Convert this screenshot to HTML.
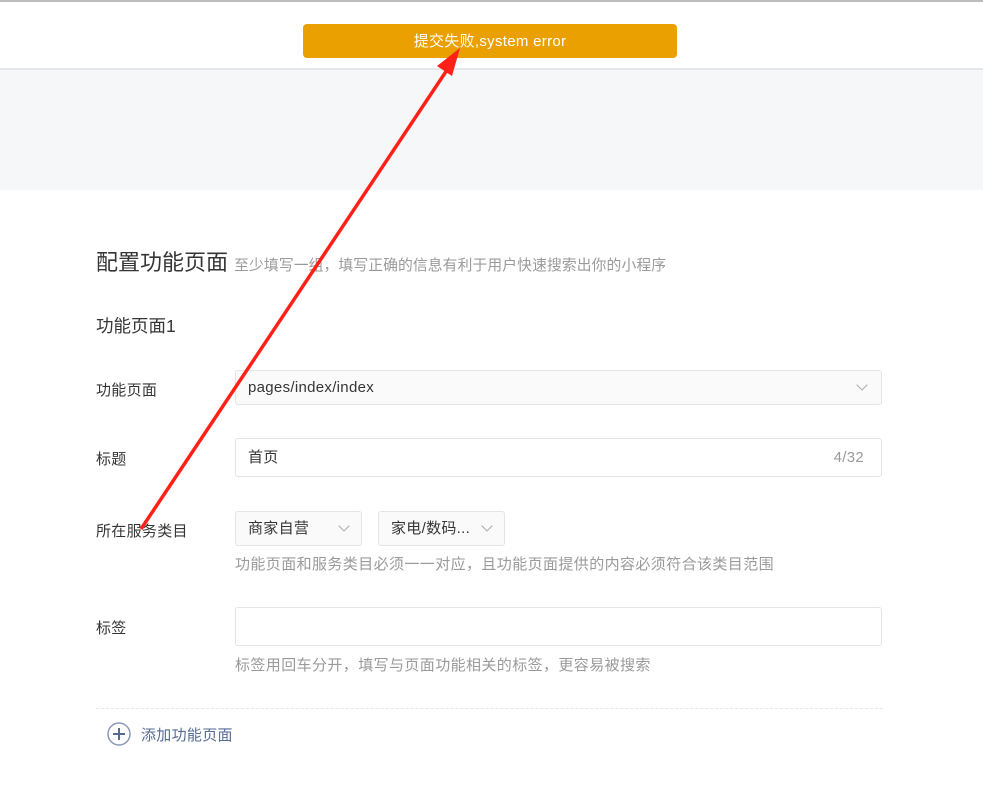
<!DOCTYPE html>
<html><head><meta charset="utf-8"><style>
body{margin:0;width:983px;height:795px;background:#fff;font-family:"Liberation Sans","Noto Sans CJK SC",sans-serif;position:relative;overflow:hidden;color:#353535}
.a{position:absolute}
.lbl{position:absolute;left:96px;font-size:15px;letter-spacing:.3px;color:#353535}
.box{position:absolute;border:1px solid #e4e4e4;border-radius:3px;box-sizing:border-box;font-size:15px;letter-spacing:.3px;color:#353535;padding-left:12px}
.hint{position:absolute;left:235px;font-size:15px;letter-spacing:.4px;color:#9a9a9a}
.chev{position:absolute;width:7px;height:7px;border-right:1.5px solid #aaa;border-bottom:1.5px solid #aaa;transform:rotate(45deg)}
</style></head><body>
<div class="a" style="left:0;top:0;width:983px;height:2px;background:#bdbdbd"></div>
<div class="a" style="left:0;top:68px;width:983px;height:2px;background:#e6e7ea"></div>
<div class="a" style="left:0;top:70px;width:983px;height:120px;background:#f6f7f9"></div>
<div class="a" style="left:303px;top:24px;width:374px;height:34px;background:#eaa000;border-radius:4px;color:#fff;font-size:15px;letter-spacing:.3px;text-align:center;line-height:36px">提交失败,system error</div>
<div class="a" style="left:96px;top:245px;font-size:22px;color:#353535">配置功能页面 <span style="font-size:14.8px;color:#9a9a9a;letter-spacing:.1px">至少填写一组，填写正确的信息有利于用户快速搜索出你的小程序</span></div>
<div class="a" style="left:96px;top:313px;font-size:17.5px">功能页面1</div>
<div class="lbl" style="top:379px">功能页面</div>
<div class="box" style="left:235px;top:370px;width:647px;height:35px;line-height:33px;background:#fafafa">pages/index/index</div>
<div class="chev" style="left:858px;top:381px"></div>
<div class="lbl" style="top:448px">标题</div>
<div class="box" style="left:235px;top:438px;width:647px;height:39px;line-height:37px">首页<span style="position:absolute;right:17px;color:#9a9a9a">4/32</span></div>
<div class="lbl" style="top:520px">所在服务类目</div>
<div class="box" style="left:235px;top:511px;width:127px;height:35px;line-height:33px;background:#fafafa">商家自营</div>
<div class="chev" style="left:340px;top:522px"></div>
<div class="box" style="left:378px;top:511px;width:127px;height:35px;line-height:33px;background:#fafafa">家电/数码...</div>
<div class="chev" style="left:483px;top:522px"></div>
<div class="hint" style="top:553px">功能页面和服务类目必须一一对应，且功能页面提供的内容必须符合该类目范围</div>
<div class="lbl" style="top:617px">标签</div>
<div class="box" style="left:235px;top:607px;width:647px;height:39px"></div>
<div class="hint" style="top:654px">标签用回车分开，填写与页面功能相关的标签，更容易被搜索</div>
<div class="a" style="left:96px;top:708px;width:787px;border-top:1px dashed #e4e6ea"></div>
<svg class="a" style="left:106px;top:721px" width="26" height="26"><circle cx="13" cy="13" r="11" fill="none" stroke="#8b9ab8" stroke-width="1.5"/><path d="M13 7v12M7 13h12" stroke="#566b94" stroke-width="2"/></svg>
<div class="a" style="left:141px;top:724px;font-size:15px;letter-spacing:.3px;color:#566b94">添加功能页面</div>
<svg class="a" style="left:0;top:0" width="983" height="795"><path d="M141 529L447 70" stroke="#ff2118" stroke-width="3.5"/><polygon points="460,48 437,66 452,76" fill="#ff2118"/></svg>
</body></html>
